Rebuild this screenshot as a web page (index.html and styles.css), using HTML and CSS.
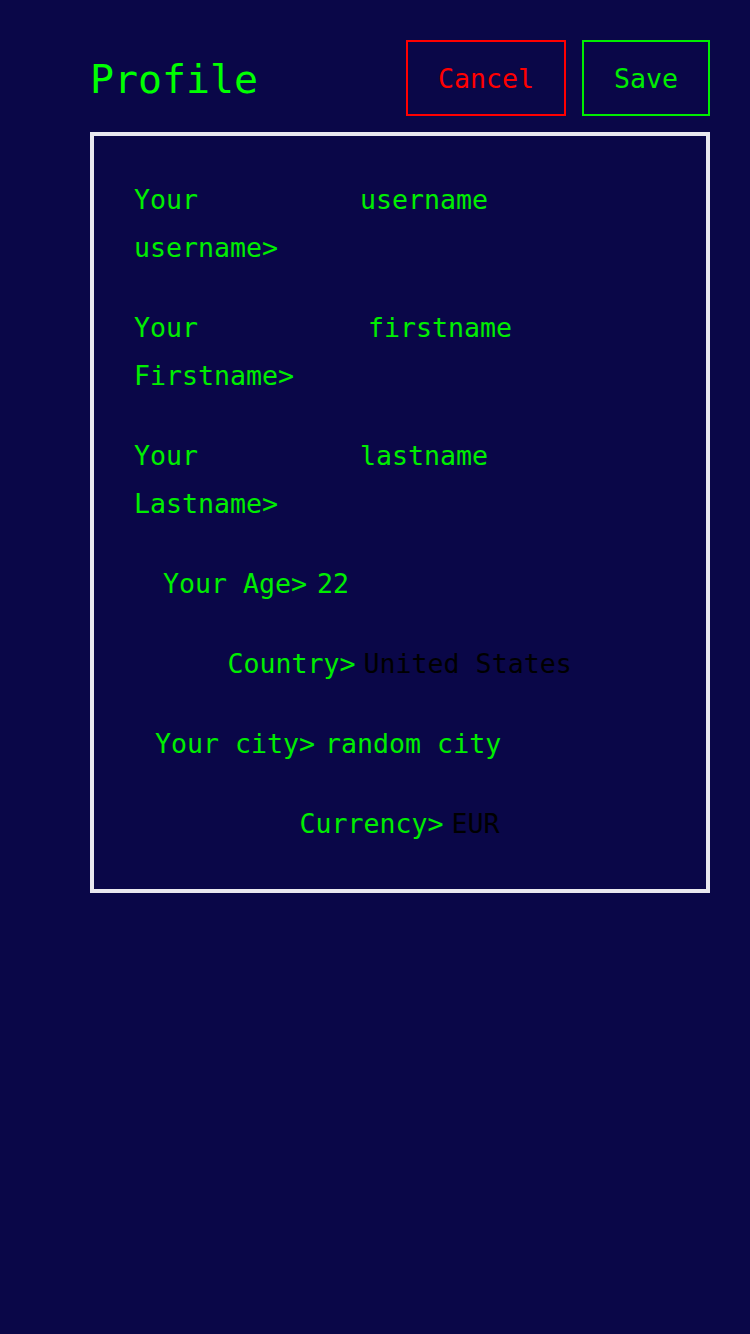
FILE: index.html
```html
<!DOCTYPE html>
<html lang="en">
<head>
<meta charset="utf-8">
<title>Profile</title>
<link rel="stylesheet" href="styles.css">
</head>
<body>
<div class="page">
  <header class="header">
    <h1 class="title">Profile</h1>
    <div class="actions">
      <button class="btn btn-cancel" type="button">Cancel</button>
      <button class="btn btn-save" type="button">Save</button>
    </div>
  </header>
  <form class="card">
    <div class="field field-wrap">
      <label class="wrap-label wrap-label-short" for="username">Your username username&gt;</label>
      <input class="wrap-input" id="username" type="text" value="">
    </div>
    <div class="field field-wrap">
      <label class="wrap-label wrap-label-long" for="firstname">Your firstname Firstname&gt;</label>
      <input class="wrap-input" id="firstname" type="text" value="">
    </div>
    <div class="field field-wrap">
      <label class="wrap-label wrap-label-short" for="lastname">Your lastname Lastname&gt;</label>
      <input class="wrap-input" id="lastname" type="text" value="">
    </div>
    <div class="field field-center">
      <label class="label" for="age">Your Age&gt;</label>
      <input class="text-input" id="age" type="text" value="22">
    </div>
    <div class="field field-center">
      <label class="label" for="country">Country&gt;</label>
      <select class="select" id="country"><option>United States</option></select>
    </div>
    <div class="field field-center">
      <label class="label" for="city">Your city&gt;</label>
      <input class="text-input" id="city" type="text" value="random city">
    </div>
    <div class="field field-center">
      <label class="label" for="currency">Currency&gt;</label>
      <select class="select" id="currency"><option>EUR</option></select>
    </div>
  </form>
</div>
</body>
</html>
```

FILE: styles.css
```css
* { box-sizing: border-box; }

html, body {
  margin: 0;
  padding: 0;
  background: #0a0748;
  min-height: 100%;
}

body {
  font-family: "DejaVu Sans Mono", "Liberation Mono", monospace;
  font-size: 26.6px;
  color: #00ee00;
}

.page {
  width: 620px;
  margin: 40px 0 0 90px;
}

.header {
  display: flex;
  align-items: center;
  justify-content: space-between;
  height: 76px;
}

.title {
  margin: 4px 0 0 0;
  font-size: 39.9px;
  font-weight: normal;
  color: #00ff00;
  line-height: 1;
}

.actions {
  display: flex;
  gap: 16px;
  height: 76px;
}

.btn {
  font-family: inherit;
  font-size: 26.6px;
  background: transparent;
  border: 2px solid;
  padding: 0 30px;
  height: 76px;
  cursor: pointer;
}

.btn-cancel {
  color: #ff0000;
  border-color: #ff0000;
}

.btn-save {
  color: #00ee00;
  border-color: #00ee00;
}

.card {
  margin: 16px 0 0 0;
  border: 4px solid #e9e8ef;
  padding: 40px 40px 41px 40px;
  display: flex;
  flex-direction: column;
  gap: 32px;
}

.field {
  display: flex;
  line-height: 48px;
}

.field-center {
  justify-content: center;
  gap: 8px;
}

.wrap-label {
  text-align: justify;
  flex: none;
}

.wrap-label-short { width: 354px; }
.wrap-label-long { width: 378px; }

.wrap-input {
  flex: 1;
  min-width: 0;
  height: 48px;
  background: transparent;
  border: none;
  font: inherit;
  color: #00ee00;
  outline: none;
}

.label {
  white-space: nowrap;
}

.text-input {
  width: 322px;
  height: 48px;
  padding: 0 2px;
  background: transparent;
  border: none;
  font: inherit;
  color: #00ee00;
  outline: none;
}

.select {
  appearance: none;
  -webkit-appearance: none;
  height: 48px;
  padding: 0;
  margin: 0;
  background: transparent;
  border: none;
  font: inherit;
  color: #000000;
  outline: none;
}
```
